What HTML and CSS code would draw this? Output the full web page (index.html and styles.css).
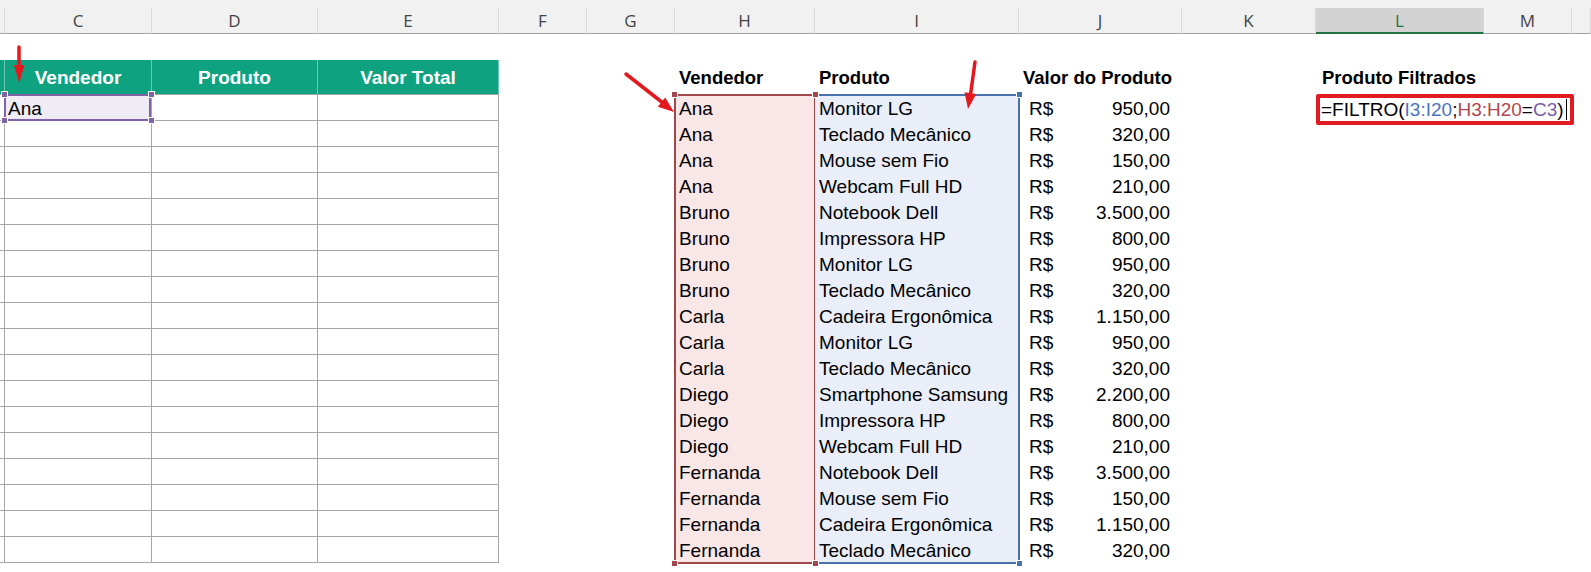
FILE: index.html
```html
<!DOCTYPE html>
<html lang="pt-BR">
<head>
<meta charset="utf-8">
<title>FILTRO</title>
<link rel="stylesheet" href="styles.css">
</head>
<body>
<div class="sheet">
  <div class="colhead">
    <div class="ch"></div>
    <div class="ch">C</div>
    <div class="ch">D</div>
    <div class="ch">E</div>
    <div class="ch">F</div>
    <div class="ch">G</div>
    <div class="ch">H</div>
    <div class="ch">I</div>
    <div class="ch">J</div>
    <div class="ch">K</div>
    <div class="ch sel">L</div>
    <div class="ch">M</div>
    <div class="ch"></div>
  </div>

  <div class="grid">
    <div class="lt">
      <div class="lc lh"></div><div class="lc lh">Vendedor</div><div class="lc lh">Produto</div><div class="lc lh">Valor Total</div>
      <div class="lc"></div><div class="lc lsel">Ana<span class="hd p tl"></span><span class="hd p tr"></span><span class="hd p bl"></span><span class="hd p br"></span></div><div class="lc"></div><div class="lc"></div>
      <div class="lc"></div><div class="lc"></div><div class="lc"></div><div class="lc"></div>
      <div class="lc"></div><div class="lc"></div><div class="lc"></div><div class="lc"></div>
      <div class="lc"></div><div class="lc"></div><div class="lc"></div><div class="lc"></div>
      <div class="lc"></div><div class="lc"></div><div class="lc"></div><div class="lc"></div>
      <div class="lc"></div><div class="lc"></div><div class="lc"></div><div class="lc"></div>
      <div class="lc"></div><div class="lc"></div><div class="lc"></div><div class="lc"></div>
      <div class="lc"></div><div class="lc"></div><div class="lc"></div><div class="lc"></div>
      <div class="lc"></div><div class="lc"></div><div class="lc"></div><div class="lc"></div>
      <div class="lc"></div><div class="lc"></div><div class="lc"></div><div class="lc"></div>
      <div class="lc"></div><div class="lc"></div><div class="lc"></div><div class="lc"></div>
      <div class="lc"></div><div class="lc"></div><div class="lc"></div><div class="lc"></div>
      <div class="lc"></div><div class="lc"></div><div class="lc"></div><div class="lc"></div>
      <div class="lc"></div><div class="lc"></div><div class="lc"></div><div class="lc"></div>
      <div class="lc"></div><div class="lc"></div><div class="lc"></div><div class="lc"></div>
      <div class="lc"></div><div class="lc"></div><div class="lc"></div><div class="lc"></div>
      <div class="lc"></div><div class="lc"></div><div class="lc"></div><div class="lc"></div>
      <div class="lc"></div><div class="lc"></div><div class="lc"></div><div class="lc"></div>
    </div>

    <div class="rt">
      <div class="rcol col-h">
        <div class="rh">Vendedor</div>
        <div class="range range-h">
          <div class="rc">Ana</div>
          <div class="rc">Ana</div>
          <div class="rc">Ana</div>
          <div class="rc">Ana</div>
          <div class="rc">Bruno</div>
          <div class="rc">Bruno</div>
          <div class="rc">Bruno</div>
          <div class="rc">Bruno</div>
          <div class="rc">Carla</div>
          <div class="rc">Carla</div>
          <div class="rc">Carla</div>
          <div class="rc">Diego</div>
          <div class="rc">Diego</div>
          <div class="rc">Diego</div>
          <div class="rc">Fernanda</div>
          <div class="rc">Fernanda</div>
          <div class="rc">Fernanda</div>
          <div class="rc">Fernanda</div>
          <span class="hd r tl"></span><span class="hd r tr"></span><span class="hd r bl"></span><span class="hd r br"></span>
        </div>
      </div>
      <div class="rcol col-i">
        <div class="rh">Produto</div>
        <div class="range range-i">
          <div class="rc">Monitor LG</div>
          <div class="rc">Teclado Mecânico</div>
          <div class="rc">Mouse sem Fio</div>
          <div class="rc">Webcam Full HD</div>
          <div class="rc">Notebook Dell</div>
          <div class="rc">Impressora HP</div>
          <div class="rc">Monitor LG</div>
          <div class="rc">Teclado Mecânico</div>
          <div class="rc">Cadeira Ergonômica</div>
          <div class="rc">Monitor LG</div>
          <div class="rc">Teclado Mecânico</div>
          <div class="rc">Smartphone Samsung</div>
          <div class="rc">Impressora HP</div>
          <div class="rc">Webcam Full HD</div>
          <div class="rc">Notebook Dell</div>
          <div class="rc">Mouse sem Fio</div>
          <div class="rc">Cadeira Ergonômica</div>
          <div class="rc">Teclado Mecânico</div>
          <span class="hd b tr"></span><span class="hd b br"></span>
        </div>
      </div>
      <div class="rcol col-j">
        <div class="rh">Valor do Produto</div>
        <div class="money">
          <div class="mc"><span>R$</span><span>950,00</span></div>
          <div class="mc"><span>R$</span><span>320,00</span></div>
          <div class="mc"><span>R$</span><span>150,00</span></div>
          <div class="mc"><span>R$</span><span>210,00</span></div>
          <div class="mc"><span>R$</span><span>3.500,00</span></div>
          <div class="mc"><span>R$</span><span>800,00</span></div>
          <div class="mc"><span>R$</span><span>950,00</span></div>
          <div class="mc"><span>R$</span><span>320,00</span></div>
          <div class="mc"><span>R$</span><span>1.150,00</span></div>
          <div class="mc"><span>R$</span><span>950,00</span></div>
          <div class="mc"><span>R$</span><span>320,00</span></div>
          <div class="mc"><span>R$</span><span>2.200,00</span></div>
          <div class="mc"><span>R$</span><span>800,00</span></div>
          <div class="mc"><span>R$</span><span>210,00</span></div>
          <div class="mc"><span>R$</span><span>3.500,00</span></div>
          <div class="mc"><span>R$</span><span>150,00</span></div>
          <div class="mc"><span>R$</span><span>1.150,00</span></div>
          <div class="mc"><span>R$</span><span>320,00</span></div>
        </div>
      </div>
    </div>

    <div class="ft">Produto Filtrados</div>
    <div class="fe">
      <div class="editor">=FILTRO(<span class="f-i">I3:I20</span>;<span class="f-h">H3:H20</span>=<span class="f-c">C3</span>)<span class="caret"></span></div>
    </div>
  </div>

  <svg class="arrows" width="1591" height="572" viewBox="0 0 1591 572" aria-hidden="true">
    <g stroke="#e3191f" stroke-width="3.5" stroke-linecap="round" fill="none">
      <path d="M19 47 V67"/>
      <path d="M626 74 L663 103"/>
      <path d="M975 62 L970.6 94"/>
    </g>
    <g fill="#e3191f">
      <polygon points="14,65 24.5,65 19.2,83"/>
      <polygon points="657.8,106.8 665.2,97.4 674,112"/>
      <polygon points="964.5,92.3 976.3,94.1 968,109"/>
    </g>
  </svg>
</div>
</body>
</html>
```

FILE: styles.css
```css
:root {
  --cols: 5px 147px 166px 181px 88px 88px 140px 204px 163px 134px 168px 88px 19px;
}

html, body {
  margin: 0;
  padding: 0;
  background: #fff;
}

.sheet {
  position: relative;
  width: 1591px;
  height: 572px;
  overflow: hidden;
  background: #fff;
  font-family: "Liberation Sans", Arial, sans-serif;
  color: #000;
}

/* column headers */
.colhead {
  display: grid;
  grid-template-columns: var(--cols);
  height: 34px;
  padding-top: 8px;
  box-sizing: border-box;
  background: #f1f1f1;
}

.ch {
  box-sizing: border-box;
  border-bottom: 1px solid #a3a3a3;
  border-right: 1px solid #d9d9d9;
  display: flex;
  align-items: center;
  justify-content: center;
  font-family: "Open Sans", "Noto Sans", sans-serif;
  font-size: 17px;
  color: #444;
}

.ch.sel {
  background: #d3d3d3;
  color: #1f7244;
  border-bottom: 2px solid #1f7244;
}

/* sheet body */
.grid {
  display: grid;
  grid-template-columns: var(--cols);
  grid-template-rows: 26px 35px repeat(18, 26px);
}

/* left table */
.lt {
  grid-column: 1 / 5;
  grid-row: 2 / 21;
  display: grid;
  grid-template-columns: 5px 147px 166px 181px;
  grid-template-rows: 35px repeat(18, 26px);
}

.lc {
  box-sizing: border-box;
  border-right: 1px solid #a6a6a6;
  border-bottom: 1px solid #a6a6a6;
  padding: 2px 0 0 3px;
  font-size: 19px;
  line-height: 24px;
  white-space: nowrap;
}

.lh {
  background: #0fa281;
  color: #fff;
  font-weight: bold;
  text-align: center;
  padding: 2px 0 0;
  line-height: 32px;
  border-right-color: #6cc8b1;
}

.lsel {
  position: relative;
  background: #efecf6;
}

.lsel::after {
  content: "";
  position: absolute;
  top: -1px;
  left: -1px;
  right: 0;
  bottom: -1px;
  border: 2px solid #7f62a8;
  pointer-events: none;
}

/* range handles */
.hd {
  position: absolute;
  width: 5px;
  height: 5px;
  z-index: 2;
  outline: 1px solid #fff;
}
.hd.p { background: #7f62a8; }
.hd.r { background: #a3474b; }
.hd.b { background: #4a72aa; }
.hd.tl { left: -3px; top: -3px; }
.hd.tr { right: -3px; top: -3px; }
.hd.bl { left: -3px; bottom: -3px; }
.hd.br { right: -3px; bottom: -3px; }

/* right table */
.rt {
  grid-column: 7 / 10;
  grid-row: 2 / 21;
  display: flex;
}

.rcol {
  display: flex;
  flex-direction: column;
}
.col-h { width: 140px; }
.col-i { width: 204px; }
.col-j { width: 163px; }

.rh {
  height: 35px;
  box-sizing: border-box;
  display: flex;
  align-items: flex-end;
  padding: 0 0 4px 4px;
  font-size: 18.5px;
  line-height: 26px;
  font-weight: bold;
  white-space: nowrap;
}

.range {
  position: relative;
  display: flex;
  flex-direction: column;
}

.range::after {
  content: "";
  position: absolute;
  top: -1px;
  left: -1px;
  right: -1px;
  bottom: -1px;
  border: 2px solid transparent;
  pointer-events: none;
}

.range-h { background: #f9e6e6; }
.range-h::after { border-color: #a3474b; }

.range-i { background: #e9eef8; }
.range-i::after {
  left: 1px;
  border-color: #4a72aa;
  border-left: none;
}

.rc {
  height: 26px;
  box-sizing: border-box;
  padding: 1px 0 0 4px;
  font-size: 19px;
  line-height: 25px;
  white-space: nowrap;
}

.money {
  display: flex;
  flex-direction: column;
}

.mc {
  height: 26px;
  box-sizing: border-box;
  display: flex;
  justify-content: space-between;
  padding: 1px 12px 0 10px;
  font-size: 19px;
  line-height: 25px;
  white-space: nowrap;
}

/* filter block */
.ft {
  grid-column: 11;
  grid-row: 2;
  display: flex;
  align-items: flex-end;
  padding: 0 0 4px 6px;
  font-size: 18.5px;
  line-height: 26px;
  font-weight: bold;
  white-space: nowrap;
}

.fe {
  grid-column: 11;
  grid-row: 3;
}

.editor {
  width: 258px;
  height: 31px;
  margin-top: -1px;
  box-sizing: border-box;
  border: 4px solid #e11b22;
  border-radius: 2px;
  background: #fff;
  padding: 1px 0 0 1px;
  font-size: 19px;
  line-height: 21px;
  white-space: nowrap;
}

.f-i { color: #4a74bd; }
.f-h { color: #b2464c; }
.f-c { color: #7a5ca8; }

.caret {
  display: inline-block;
  width: 0;
  height: 21px;
  margin-left: 2px;
  border-left: 1px solid #000;
  vertical-align: -4px;
}

/* annotation arrows */
.arrows {
  position: absolute;
  left: 0;
  top: 0;
  pointer-events: none;
}
```
